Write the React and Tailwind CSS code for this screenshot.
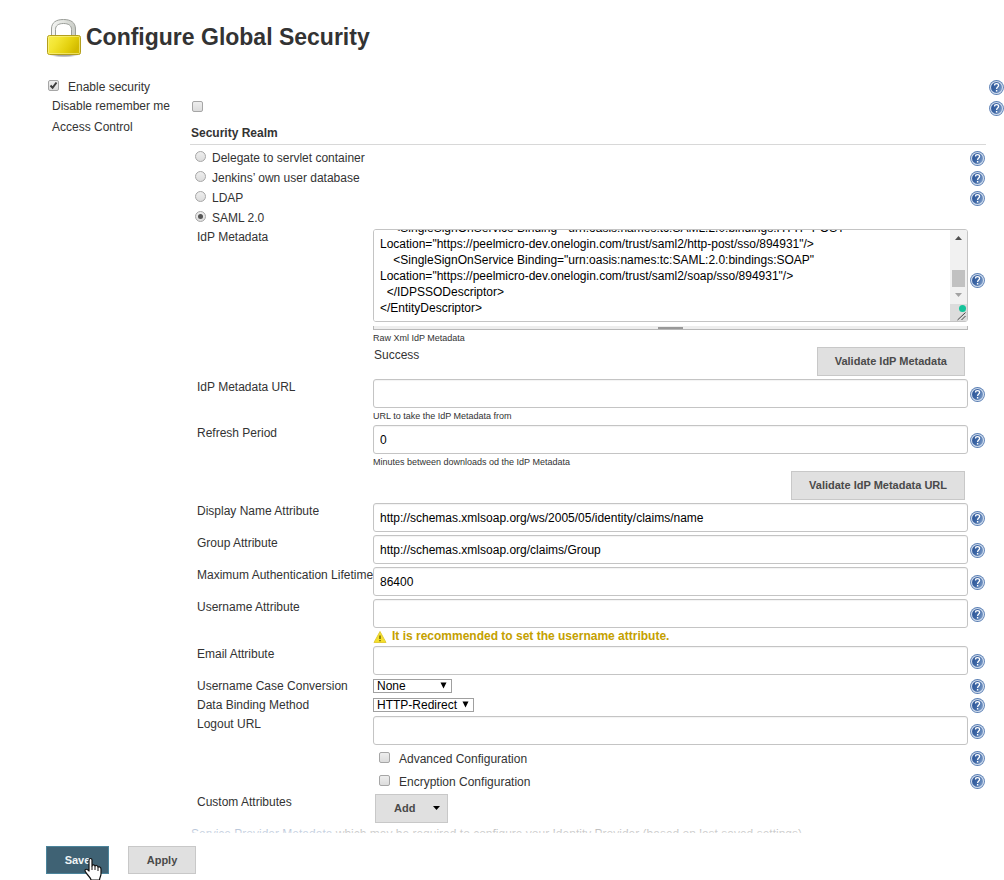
import { useEffect, useId, useRef } from "react";

const METADATA = [
  '    <SingleSignOnService Binding="urn:oasis:names:tc:SAML:2.0:bindings:HTTP-POST"',
  'Location="https://peelmicro-dev.onelogin.com/trust/saml2/http-post/sso/894931"/>',
  '    <SingleSignOnService Binding="urn:oasis:names:tc:SAML:2.0:bindings:SOAP"',
  'Location="https://peelmicro-dev.onelogin.com/trust/saml2/soap/sso/894931"/>',
  "  </IDPSSODescriptor>",
  "</EntityDescriptor>",
].join("\n");

function LockIcon() {
  return (
    <svg viewBox="0 0 36 40" className="h-10 w-9 shrink-0" aria-hidden="true">
      <defs>
        <linearGradient id="lock-body" x1="0" y1="0" x2="1" y2="0.4">
          <stop offset="0" stopColor="#f8ef4e" />
          <stop offset="0.35" stopColor="#f3e532" />
          <stop offset="0.75" stopColor="#e3cf0c" />
          <stop offset="1" stopColor="#d3bb00" />
        </linearGradient>
        <linearGradient id="lock-shackle" x1="0" y1="0" x2="1" y2="0">
          <stop offset="0" stopColor="#f4f5f3" />
          <stop offset="0.5" stopColor="#e2e4e0" />
          <stop offset="1" stopColor="#c9ccc6" />
        </linearGradient>
        <radialGradient id="lock-shadow">
          <stop offset="0.5" stopColor="#000" stopOpacity="0.35" />
          <stop offset="1" stopColor="#000" stopOpacity="0" />
        </radialGradient>
      </defs>
      <ellipse cx="18" cy="36.500" rx="15" ry="3" fill="url(#lock-shadow)" />
      <path
        d="M5.500 18V11C5.500 4.500 10 1.500 17.500 1.500S29.500 4.500 29.500 11V18H25.500V11.500C25.500 7.500 22.500 5.500 17.500 5.500S9.500 7.500 9.500 11.500V18Z"
        fill="url(#lock-shackle)"
        stroke="#9b9e99"
        strokeWidth="1"
      />
      <rect x="1.500" y="17.500" width="33" height="19" rx="2" fill="url(#lock-body)" stroke="#b39e1c" />
      <rect x="2.500" y="18.500" width="31" height="17" rx="1" fill="none" stroke="#fbf59a" strokeOpacity="0.6" />
    </svg>
  );
}

function Help({ topic }) {
  return (
    <button type="button" aria-label={`Help for ${topic}`} className="block h-[15px] w-[15px] shrink-0">
      <svg viewBox="0 0 15 15" className="block h-full w-full">
        <defs>
          <linearGradient id="help-fill" x1="0" y1="0.3" x2="1" y2="0.7">
            <stop offset="0" stopColor="#2c5597" />
            <stop offset="0.5" stopColor="#3f68a6" />
            <stop offset="1" stopColor="#84a3cd" />
          </linearGradient>
        </defs>
        <circle cx="7.500" cy="7.500" r="7.400" fill="#5a7fb4" />
        <circle cx="7.500" cy="7.500" r="6" fill="url(#help-fill)" stroke="#cfdbec" strokeWidth="1.100" />
        <path d="M5.500 5.500C5.500 4.200 6.300 3.700 7.500 3.700S9.600 4.400 9.600 5.500C9.600 7 7.600 7.200 7.600 9" fill="none" stroke="#fff" strokeWidth="1.300" />
        <rect x="6.900" y="10" width="1.400" height="1.500" fill="#fff" />
      </svg>
    </button>
  );
}

function Check({ id, checked }) {
  return (
    <span className="grid h-[11px] w-[11px] shrink-0">
      <input
        id={id}
        type="checkbox"
        defaultChecked={checked}
        className="peer col-start-1 row-start-1 h-[11px] w-[11px] appearance-none rounded-xs border border-[#a6a6a6] bg-linear-to-b from-[#eeeeee] to-[#dcdcdc]"
      />
      <svg viewBox="0 0 11 11" className="pointer-events-none invisible col-start-1 row-start-1 h-[11px] w-[11px] peer-checked:visible">
        <path d="M2.500 5.500L4.600 7.800L8.500 2.500" fill="none" stroke="#3c3c3c" strokeWidth="2" />
      </svg>
    </span>
  );
}

function RealmOption({ label, checked, help }) {
  const id = useId();
  return (
    <div className="flex h-5 items-center">
      <span className="mb-[3px] ml-[5px] grid h-[11px] w-[11px] place-items-center">
        <input
          id={id}
          type="radio"
          name="realm"
          defaultChecked={checked}
          className="peer col-start-1 row-start-1 h-[11px] w-[11px] appearance-none rounded-full border border-[#a6a6a6] bg-linear-to-b from-[#eeeeee] to-[#dcdcdc]"
        />
        <span className="pointer-events-none invisible col-start-1 row-start-1 h-[5px] w-[5px] rounded-full bg-[#555] peer-checked:visible" />
      </span>
      <label htmlFor={id} className="ml-[6px] flex-1">{label}</label>
      {help && <Help topic={label} />}
      <span className="w-px" />
    </div>
  );
}

function Row({ label, id, children, help = true }) {
  return (
    <div className="grid grid-cols-[176px_1fr_18px] pl-[7px]">
      <label htmlFor={id} className="whitespace-nowrap">{label}</label>
      <div className="min-w-0">{children}</div>
      {help && <div className="self-center pt-px pl-[2px]"><Help topic={label} /></div>}
    </div>
  );
}

const INPUT =
  "block h-[29px] w-full rounded-[3px] border border-[#c4c4c4] bg-white px-[6px] text-[12px] text-black shadow-[inset_0_1px_1px_rgba(0,0,0,0.05)] outline-none";

function TextRow({ label, value = "", note }) {
  const id = useId();
  return (
    <div>
      <Row label={label} id={id}>
        <input id={id} type="text" defaultValue={value} className={INPUT} />
      </Row>
      {note}
    </div>
  );
}

function Caption({ children }) {
  return <p className="h-[14px] pl-[183px] text-[9px] leading-4">{children}</p>;
}

function SelectRow({ label, options, width }) {
  const id = useId();
  return (
    <Row label={label} id={id}>
      <div className={`relative pt-px ${width}`}>
        <select
          id={id}
          className="block h-[14px] w-full appearance-none border border-[#a0a0a0] bg-white pl-[3px] text-[12px] leading-3 text-black outline-none"
        >
          {options.map((o) => (
            <option key={o}>{o}</option>
          ))}
        </select>
        <svg viewBox="0 0 7 7" className="pointer-events-none absolute top-1 right-[5px] h-[7px] w-[7px]">
          <path d="M0.500 0.500H6.500L3.500 6.500Z" fill="#000" />
        </svg>
      </div>
    </Row>
  );
}

function CheckRow({ label }) {
  const id = useId();
  return (
    <div className="flex h-5 items-center pr-px pl-[189px]">
      <span className="mb-px"><Check id={id} /></span>
      <label htmlFor={id} className="ml-[9px] flex-1 pt-px">{label}</label>
      <span className="pt-px"><Help topic={label} /></span>
    </div>
  );
}

const BUTTON = "border border-[#c8c8c8] bg-[#e0e0e0] pb-px text-[11px] font-bold text-[#4a4a4a]";

function MetadataRow() {
  const ref = useRef(null);
  useEffect(() => {
    ref.current.scrollTop = ref.current.scrollHeight;
  }, []);
  return (
    <div>
      <Row label="IdP Metadata" id="metadata">
        <div className="flex h-[93px] overflow-hidden rounded-[3px] border border-[#c4c4c4]">
          <textarea
            id="metadata"
            ref={ref}
            defaultValue={METADATA}
            className="block h-full min-w-0 flex-1 resize-none overflow-hidden bg-white px-[6px] py-[5px] text-[12px] leading-4 whitespace-pre text-black outline-none"
          />
          <div className="flex w-[17px] flex-col bg-[#f1f1f1]" aria-hidden="true">
            <svg viewBox="0 0 17 17" className="h-[17px] w-[17px]">
              <path d="M5 10H12L8.500 6Z" fill="#505050" />
            </svg>
            <div className="flex-1" />
            <div className="ml-[2px] h-[17px] w-[13px] bg-[#c1c1c1]" />
            <svg viewBox="0 0 17 17" className="h-[17px] w-[17px]">
              <path d="M5 6H12L8.500 10Z" fill="#a3a3a3" />
            </svg>
            <svg viewBox="0 0 17 17" className="h-[17px] w-[17px] bg-[#dcdcdc]">
              <circle cx="12.500" cy="4.500" r="3.500" fill="#15c39a" />
              <path d="M7.500 16L15.500 8.500M11.500 16L15.500 12" stroke="#444" strokeWidth="1" fill="none" />
            </svg>
          </div>
        </div>
        <div className="mt-1 flex h-1 justify-center border-x border-b border-[#b8b8b8] bg-[#eeeeee]">
          <div className="mt-px h-[2px] w-[25px] bg-[#999]" />
        </div>
      </Row>
      <p className="pl-[183px] text-[9px]">Raw Xml IdP Metadata</p>
      <div className="flex items-start justify-between pt-px pr-[21px] pl-[184px]">
        <span>Success</span>
        <button type="button" className={`${BUTTON} h-[29px] px-[17px]`}>Validate IdP Metadata</button>
      </div>
    </div>
  );
}

export default function App() {
  return (
    <form className="flex h-screen flex-col overflow-hidden bg-white font-['Liberation_Sans',Arial,sans-serif] text-[12px] leading-4 text-[#333]">
      <main className="min-h-0 flex-1 overflow-y-auto pt-[18px] pl-[46px] [scrollbar-width:none]">
        <header className="flex h-10 items-center gap-1">
          <LockIcon />
          <h1 className="pb-[2px] text-[23px] leading-8 font-bold">Configure Global Security</h1>
        </header>

        <div className="mt-5 flex h-[18px] items-center">
          <span className="mb-1 ml-[2px]"><Check id="enable" checked /></span>
          <label htmlFor="enable" className="ml-[9px] flex-1">Enable security</label>
          <Help topic="Enable security" />
        </div>
        <div className="flex h-5 items-center">
          <label htmlFor="remember" className="w-[146px] pl-[6px]">Disable remember me</label>
          <Check id="remember" />
          <span className="flex-1" />
          <span className="pt-1"><Help topic="Disable remember me" /></span>
        </div>

        <section className="grid grid-cols-[144px_1fr] pr-[18px]">
          <p className="pt-[3px] pl-[6px]">Access Control</p>
          <div className="min-w-0">
            <h2 className="border-b border-[#d8d8d8] pt-[9px] pb-[3px] pl-px font-bold">Security Realm</h2>
            <div className="pt-[3px]">
              <RealmOption label="Delegate to servlet container" help />
              <RealmOption label="Jenkins’ own user database" help />
              <RealmOption label="LDAP" help />
              <RealmOption label="SAML 2.0" checked />
            </div>
            <div className="flex flex-col gap-[3px] pt-px">
              <MetadataRow />
              <TextRow label="IdP Metadata URL" note={<Caption>URL to take the IdP Metadata from</Caption>} />
              <TextRow label="Refresh Period" value="0" note={<Caption>Minutes between downloads od the IdP Metadata</Caption>} />
              <div className="flex justify-end pr-[21px]">
                <button type="button" className={`${BUTTON} h-[29px] px-[17px]`}>Validate IdP Metadata URL</button>
              </div>
              <TextRow label="Display Name Attribute" value="http://schemas.xmlsoap.org/ws/2005/05/identity/claims/name" />
              <TextRow label="Group Attribute" value="http://schemas.xmlsoap.org/claims/Group" />
              <TextRow label="Maximum Authentication Lifetime" value="86400" />
              <TextRow
                label="Username Attribute"
                note={
                  <p className="flex h-[15px] items-center gap-[5px] pl-[183px] font-bold text-[#c4a000]">
                    <svg viewBox="0 0 14 14" className="mt-[3px] h-[14px] w-[14px]" aria-hidden="true">
                      <path d="M7 1.500L13 12.500H1Z" fill="#f5e02c" stroke="#e3cc3a" strokeLinejoin="round" />
                      <path d="M7 5.500V9M7 10V11.200" stroke="#5c5300" strokeWidth="1.300" />
                    </svg>
                    It is recommended to set the username attribute.
                  </p>
                }
              />
              <TextRow label="Email Attribute" />
              <SelectRow label="Username Case Conversion" options={["None"]} width="w-[79px]" />
              <SelectRow label="Data Binding Method" options={["HTTP-Redirect"]} width="w-[101px]" />
              <TextRow label="Logout URL" />
              <CheckRow label="Advanced Configuration" />
              <CheckRow label="Encryption Configuration" />
              <Row label="Custom Attributes" id="add" help={false}>
                <button id="add" type="button" className={`${BUTTON} ml-[2px] flex h-[29px] w-[73px] items-center justify-between pr-[7px] pl-[18px]`}>
                  Add
                  <svg viewBox="0 0 7 4" className="h-1 w-[7px]" aria-hidden="true">
                    <path d="M0 0H7L3.500 4Z" fill="#000" />
                  </svg>
                </button>
              </Row>
              <p className="pl-px">
                <a href="#metadata" className="text-[#204a87]">Service Provider Metadata</a> which may be required to configure your Identity Provider (based on last saved settings)
              </p>
            </div>
          </div>
        </section>
      </main>

      <footer className="relative flex gap-[19px] bg-white pt-[13px] pb-[6px] pl-[46px]">
        <div className="pointer-events-none absolute inset-x-0 -top-[10px] h-[10px] bg-linear-to-t from-white/80 to-white/50" />
        <div className="relative">
          <button type="submit" className="block h-7 w-[63px] border border-[#4b849b] bg-[#3f6274] text-[11px] font-bold text-[#f0f4f6]">Save</button>
          <svg viewBox="0 0 18 24" className="pointer-events-none absolute top-[11px] left-[38px] h-6 w-[18px]" aria-hidden="true">
            <path
              d="M5 14V3C5 1 8 1 8 3V9C8 7.500 11 7.500 11 9.500C11 8 14 8 14 10.500C14 9.500 17 9.500 17 12V17C17 19 15.500 20.500 15.500 23H7C7 20.500 1 16 1 13.500C1 12 3 11.500 5 14Z"
              fill="#fff"
              stroke="#111"
              strokeWidth="1.200"
              strokeLinejoin="round"
            />
            <path d="M8 9V13M11 10V13M14 11V14" stroke="#111" strokeWidth="1" fill="none" />
          </svg>
        </div>
        <button type="button" className={`${BUTTON} h-7 w-[68px]`}>Apply</button>
      </footer>
    </form>
  );
}
